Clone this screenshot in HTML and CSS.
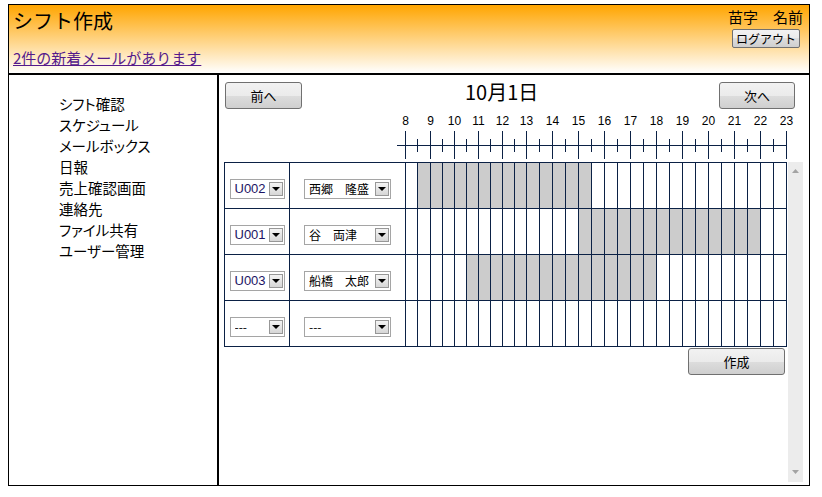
FILE: index.html
```html
<!DOCTYPE html>
<html lang="ja">
<head>
<meta charset="utf-8">
<title>シフト作成</title>
<link rel="stylesheet" href="styles.css">
</head>
<body>
<div class="frame">
  <header class="header">
    <div class="brand">
      <h1 class="title">シフト作成</h1>
      <a class="mail" href="#">2件の新着メールがあります</a>
    </div>
    <div class="user">
      <div class="uname">苗字　名前</div>
      <button class="btn logout">ログアウト</button>
    </div>
  </header>
  <div class="body">
    <ul class="side">
      <li>シフト確認</li>
      <li>スケジュール</li>
      <li>メールボックス</li>
      <li>日報</li>
      <li>売上確認画面</li>
      <li>連絡先</li>
      <li>ファイル共有</li>
      <li>ユーザー管理</li>
    </ul>
    <main class="main">
      <div class="topbar">
        <button class="btn btn-prev">前へ</button>
        <div class="date">10月1日</div>
        <button class="btn btn-next">次へ</button>
      </div>
      <svg class="timeline" width="390" height="53" viewBox="0 0 390 53">
        <g class="lbl" text-anchor="middle">
          <text x="8.5" y="16">8</text>
          <text x="33.5" y="16">9</text>
          <text x="57.5" y="16">10</text>
          <text x="81.5" y="16">11</text>
          <text x="105.5" y="16">12</text>
          <text x="129.5" y="16">13</text>
          <text x="155.5" y="16">14</text>
          <text x="181.5" y="16">15</text>
          <text x="207.5" y="16">16</text>
          <text x="233.5" y="16">17</text>
          <text x="259.5" y="16">18</text>
          <text x="285.5" y="16">19</text>
          <text x="311.5" y="16">20</text>
          <text x="337.5" y="16">21</text>
          <text x="363.5" y="16">22</text>
          <text x="389.5" y="16">23</text>
        </g>
        <g class="tick" shape-rendering="crispEdges">
          <line x1="0" y1="36.5" x2="390" y2="36.5"/>
          <line x1="8.5" y1="22" x2="8.5" y2="50"/>
          <line x1="20.5" y1="30" x2="20.5" y2="43"/>
          <line x1="33.5" y1="22" x2="33.5" y2="50"/>
          <line x1="45.5" y1="30" x2="45.5" y2="43"/>
          <line x1="57.5" y1="22" x2="57.5" y2="50"/>
          <line x1="69.5" y1="30" x2="69.5" y2="43"/>
          <line x1="81.5" y1="22" x2="81.5" y2="50"/>
          <line x1="93.5" y1="30" x2="93.5" y2="43"/>
          <line x1="105.5" y1="22" x2="105.5" y2="50"/>
          <line x1="117.5" y1="30" x2="117.5" y2="43"/>
          <line x1="129.5" y1="22" x2="129.5" y2="50"/>
          <line x1="142.5" y1="30" x2="142.5" y2="43"/>
          <line x1="155.5" y1="22" x2="155.5" y2="50"/>
          <line x1="168.5" y1="30" x2="168.5" y2="43"/>
          <line x1="181.5" y1="22" x2="181.5" y2="50"/>
          <line x1="194.5" y1="30" x2="194.5" y2="43"/>
          <line x1="207.5" y1="22" x2="207.5" y2="50"/>
          <line x1="220.5" y1="30" x2="220.5" y2="43"/>
          <line x1="233.5" y1="22" x2="233.5" y2="50"/>
          <line x1="246.5" y1="30" x2="246.5" y2="43"/>
          <line x1="259.5" y1="22" x2="259.5" y2="50"/>
          <line x1="272.5" y1="30" x2="272.5" y2="43"/>
          <line x1="285.5" y1="22" x2="285.5" y2="50"/>
          <line x1="298.5" y1="30" x2="298.5" y2="43"/>
          <line x1="311.5" y1="22" x2="311.5" y2="50"/>
          <line x1="324.5" y1="30" x2="324.5" y2="43"/>
          <line x1="337.5" y1="22" x2="337.5" y2="50"/>
          <line x1="350.5" y1="30" x2="350.5" y2="43"/>
          <line x1="363.5" y1="22" x2="363.5" y2="50"/>
          <line x1="376.5" y1="30" x2="376.5" y2="43"/>
          <line x1="389.5" y1="22" x2="389.5" y2="50"/>
        </g>
      </svg>
      <div class="scrollarea">
        <div class="content">
          <div class="sched">
            <!-- row 1 -->
            <div class="nm"><div class="sel sel-id"><span class="v code">U002</span><span class="arr"></span></div></div>
            <div class="nm"><div class="sel sel-name"><span class="v">西郷　隆盛</span><span class="arr"></span></div></div>
            <div class="s"></div>
            <div class="s on"></div><div class="s on"></div><div class="s on"></div><div class="s on"></div><div class="s on"></div><div class="s on"></div><div class="s on"></div>
            <div class="s on"></div><div class="s on"></div><div class="s on"></div><div class="s on"></div><div class="s on"></div><div class="s on"></div><div class="s on"></div>
            <div class="s"></div><div class="s"></div><div class="s"></div><div class="s"></div><div class="s"></div>
            <div class="s"></div><div class="s"></div><div class="s"></div><div class="s"></div><div class="s"></div>
            <div class="s"></div><div class="s"></div><div class="s"></div><div class="s"></div><div class="s"></div>
            <!-- row 2 -->
            <div class="nm"><div class="sel sel-id"><span class="v code">U001</span><span class="arr"></span></div></div>
            <div class="nm"><div class="sel sel-name"><span class="v">谷　両津</span><span class="arr"></span></div></div>
            <div class="s"></div><div class="s"></div><div class="s"></div><div class="s"></div><div class="s"></div><div class="s"></div><div class="s"></div>
            <div class="s"></div><div class="s"></div><div class="s"></div><div class="s"></div><div class="s"></div><div class="s"></div><div class="s"></div>
            <div class="s on"></div><div class="s on"></div><div class="s on"></div><div class="s on"></div><div class="s on"></div><div class="s on"></div><div class="s on"></div>
            <div class="s on"></div><div class="s on"></div><div class="s on"></div><div class="s on"></div><div class="s on"></div><div class="s on"></div><div class="s on"></div>
            <div class="s"></div><div class="s"></div>
            <!-- row 3 -->
            <div class="nm"><div class="sel sel-id"><span class="v code">U003</span><span class="arr"></span></div></div>
            <div class="nm"><div class="sel sel-name"><span class="v">船橋　太郎</span><span class="arr"></span></div></div>
            <div class="s"></div><div class="s"></div><div class="s"></div><div class="s"></div><div class="s"></div>
            <div class="s on"></div><div class="s on"></div><div class="s on"></div><div class="s on"></div><div class="s on"></div>
            <div class="s on"></div><div class="s on"></div><div class="s on"></div><div class="s on"></div><div class="s on"></div>
            <div class="s on"></div><div class="s on"></div><div class="s on"></div><div class="s on"></div><div class="s on"></div>
            <div class="s"></div><div class="s"></div><div class="s"></div><div class="s"></div><div class="s"></div>
            <div class="s"></div><div class="s"></div><div class="s"></div><div class="s"></div><div class="s"></div>
            <!-- row 4 -->
            <div class="nm"><div class="sel sel-id"><span class="v">---</span><span class="arr"></span></div></div>
            <div class="nm"><div class="sel sel-name"><span class="v">---</span><span class="arr"></span></div></div>
            <div class="s"></div><div class="s"></div><div class="s"></div><div class="s"></div><div class="s"></div>
            <div class="s"></div><div class="s"></div><div class="s"></div><div class="s"></div><div class="s"></div>
            <div class="s"></div><div class="s"></div><div class="s"></div><div class="s"></div><div class="s"></div>
            <div class="s"></div><div class="s"></div><div class="s"></div><div class="s"></div><div class="s"></div>
            <div class="s"></div><div class="s"></div><div class="s"></div><div class="s"></div><div class="s"></div>
            <div class="s"></div><div class="s"></div><div class="s"></div><div class="s"></div><div class="s"></div>
          </div>
          <button class="btn create">作成</button>
        </div>
        <div class="scrollbar">
          <svg class="sarr" width="7" height="4" viewBox="0 0 7 4"><polygon points="3.5,0 7,4 0,4"/></svg>
          <svg class="sarr" width="7" height="4" viewBox="0 0 7 4"><polygon points="0,0 7,0 3.5,4"/></svg>
        </div>
      </div>
    </main>
  </div>
</div>
</body>
</html>
```

FILE: styles.css
```css
* {
  box-sizing: border-box;
}

body {
  margin: 0;
  padding: 4px 0 0 8px;
  background: #fff;
  color: #000;
  font-family: "Noto Sans CJK JP", "Liberation Sans", sans-serif;
}

.frame {
  width: 802px;
  height: 482px;
  border: 1px solid #000;
  display: flex;
  flex-direction: column;
}

/* header */
.header {
  height: 70px;
  border-bottom: 2px solid #000;
  background: linear-gradient(#ffa500, #ffffff);
  display: flex;
  justify-content: space-between;
}

.brand {
  padding: 4px 0 0 4px;
}

.title {
  margin: 0;
  font-size: 20px;
  font-weight: normal;
  line-height: 24px;
}

.mail {
  display: block;
  margin-top: 16px;
  font-size: 15px;
  line-height: 18px;
  color: #551a8b;
  text-decoration: underline;
}

.user {
  display: flex;
  flex-direction: column;
  align-items: flex-end;
  padding-top: 3px;
}

.uname {
  margin-right: 6px;
  font-size: 15px;
  line-height: 18px;
}

.btn {
  display: flex;
  align-items: center;
  justify-content: center;
  padding: 0;
  border: 1px solid #707070;
  border-radius: 3px;
  background: linear-gradient(#f2f2f2 0%, #ebebeb 50%, #dddddd 50%, #cfcfcf 100%);
  color: #000;
  font-family: "Noto Sans CJK JP", "Liberation Sans", sans-serif;
  font-size: 13px;
  line-height: 16px;
}

.logout {
  margin: 3px 9px 0 0;
  width: 68px;
  height: 19px;
  font-size: 12px;
  border-radius: 2px;
}

/* body */
.body {
  flex: 1;
  display: flex;
  min-height: 0;
}

.side {
  width: 210px;
  margin: 0;
  padding: 18px 0 0 50px;
  border-right: 2px solid #000;
  list-style: none;
}

.side li {
  font-size: 14.5px;
  line-height: 21px;
  font-feature-settings: "palt";
}

.main {
  flex: 1;
  display: flex;
  flex-direction: column;
  padding: 7px 6px 3px 5px;
}

.topbar {
  display: flex;
  align-items: flex-start;
  height: 27px;
}

.btn-prev {
  margin-left: 1px;
  width: 77px;
  height: 27px;
}

.date {
  margin: -2px 0 0 163px;
  font-size: 20px;
  line-height: 24px;
}

.btn-next {
  margin: 0 8px 0 auto;
  width: 76px;
  height: 27px;
}

.timeline {
  display: block;
  margin-left: 173px;
  overflow: visible;
}

.timeline .lbl {
  font-family: "Liberation Sans", sans-serif;
  font-size: 12px;
  fill: #000;
}

.timeline .tick line {
  stroke: #0b2145;
  stroke-width: 1;
}

.scrollarea {
  flex: 1;
  display: flex;
  gap: 1px;
  min-height: 0;
}

.content {
  width: 563px;
  display: flex;
  flex-direction: column;
}

/* schedule grid */
.sched {
  display: grid;
  grid-template-columns: 64px 115px 11px 12px repeat(8, 11px) repeat(20, 12px);
  grid-auto-rows: 45px;
  gap: 1px;
  padding: 1px;
  background: #0b2145;
  width: 563px;
}

.s {
  background: #fff;
}

.s.on {
  background: #cccccc;
}

.nm {
  background: #fff;
  display: flex;
  align-items: center;
  justify-content: center;
  padding-top: 7px;
}

.sel {
  display: flex;
  align-items: center;
  height: 20px;
  border: 1px solid #a5a5a5;
  background: #fff;
  padding: 0 1px 0 4px;
}

.sel-id {
  width: 55px;
}

.sel-name {
  width: 87px;
}

.sel .v {
  flex: 1;
  font-size: 12px;
  line-height: 16px;
  white-space: nowrap;
  overflow: hidden;
}

.sel .v.code {
  font-family: "Liberation Sans", sans-serif;
  font-size: 13px;
  color: #1c1464;
}

.sel .arr {
  position: relative;
  flex: none;
  width: 14px;
  height: 14px;
  border: 1px solid #979797;
  background: linear-gradient(#f4f4f4, #d6d6d6);
}

.sel .arr::after {
  content: "";
  position: absolute;
  left: 2px;
  top: 4px;
  border-left: 4px solid transparent;
  border-right: 4px solid transparent;
  border-top: 4px solid #000;
}

.create {
  align-self: flex-end;
  margin: 1px 2px 0 0;
  width: 97px;
  height: 27px;
}

.scrollbar {
  width: 15px;
  background: #ececec;
  display: flex;
  flex-direction: column;
  justify-content: space-between;
  align-items: center;
  padding: 7px 0 8px;
}

.sarr {
  display: block;
  fill: #a3a3a3;
}
```
